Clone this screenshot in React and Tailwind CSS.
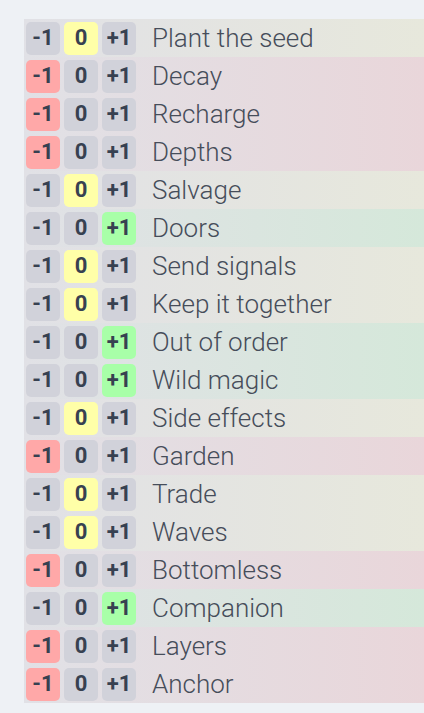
import React from 'react'

const items = [
  ['Plant the seed', 0],
  ['Decay', -1],
  ['Recharge', -1],
  ['Depths', -1],
  ['Salvage', 0],
  ['Doors', 1],
  ['Send signals', 0],
  ['Keep it together', 0],
  ['Out of order', 1],
  ['Wild magic', 1],
  ['Side effects', 0],
  ['Garden', -1],
  ['Trade', 0],
  ['Waves', 0],
  ['Bottomless', -1],
  ['Companion', 1],
  ['Layers', -1],
  ['Anchor', -1],
]

const rowBg = {
  '-1': 'bg-gradient-to-r from-[#e1e1e6] to-[#e9d6da]',
  '0': 'bg-gradient-to-r from-[#e1e1e6] to-[#e7e8dc]',
  '1': 'bg-gradient-to-r from-[#e1e1e6] to-[#d5e8da]',
}

const onBg = {
  '-1': 'bg-[#ffa8a8]',
  '0': 'bg-[#ffffa8]',
  '1': 'bg-[#a8ffa8]',
}

function Vote({ value, label, active }) {
  return (
    <div
      className={
        'w-[34px] h-[33px] rounded-[5px] flex items-center justify-center font-bold text-[22px] leading-none text-[#374151] ' +
        (active ? onBg[value] : 'bg-[#d1d2da]')
      }
    >
      {label}
    </div>
  )
}

export default function App() {
  return (
    <div className="min-h-screen bg-[#eef1f5] pt-[19px] pl-[24px]" style={{ fontFamily: 'Roboto, sans-serif' }}>
      <div className="flex flex-col">
        {items.map(([name, v]) => (
          <div key={name} className={'flex items-center h-[38px] pl-[2px] ' + rowBg[String(v)]}>
            <div className="flex gap-[4px]">
              <Vote value="-1" label="-1" active={v === -1} />
              <Vote value="0" label="0" active={v === 0} />
              <Vote value="1" label="+1" active={v === 1} />
            </div>
            <span className="ml-[16px] text-[26px] font-light leading-none text-[#464d5a]">{name}</span>
          </div>
        ))}
      </div>
    </div>
  )
}
